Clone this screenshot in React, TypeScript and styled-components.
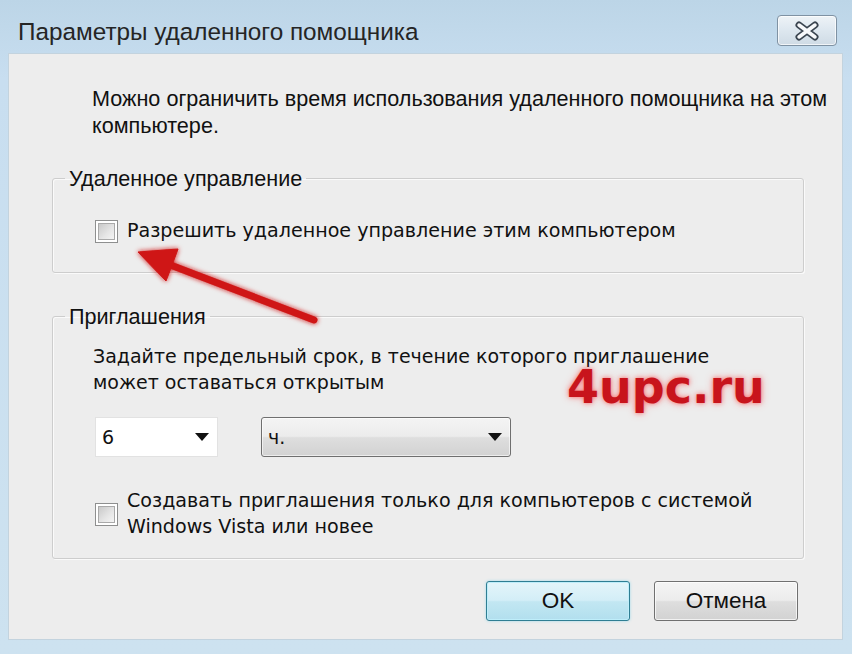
import React from "react";
import styled, { createGlobalStyle } from "styled-components";

const GlobalStyle = createGlobalStyle`
    html, body {
        margin: 0;
        padding: 0;
    }
    body {
        background: #c9dfee;
        font-family: "Liberation Sans", Arial, sans-serif;
        color: #111;
    }
`;

const Window = styled.div`
    position: relative;
    width: 852px;
    height: 654px;
    display: flex;
    flex-direction: column;
    background: linear-gradient(180deg, #bcd5e7 0%, #c8def0 12%, #cde2f0 100%);
    overflow: hidden;
`;

const TitleBar = styled.div`
    height: 53px;
    display: flex;
    align-items: flex-start;
    justify-content: space-between;
    padding: 15px 15px 0 18px;
    box-sizing: border-box;
`;

const Title = styled.div`
    margin-top: 4px;
    font-size: 24.3px;
    line-height: 26px;
    color: #252525;
`;

const CloseButton = styled.div`
    width: 60px;
    height: 31px;
    box-sizing: border-box;
    border: 1px solid #7f92a3;
    border-radius: 4px;
    background: linear-gradient(180deg, #eef3f7 0%, #dde7ef 50%, #cfdbe5 100%);
    box-shadow: inset 0 0 0 1px rgba(255, 255, 255, 0.7);
    display: flex;
    align-items: center;
    justify-content: center;
`;

const Client = styled.div`
    flex: 1;
    margin: 0 9px 14px 8px;
    background: #ededed;
    border: 1px solid #c3d3de;
    display: flex;
    flex-direction: column;
`;

const Description = styled.p`
    margin: 31px 0 0 83px;
    font-size: 21.6px;
    line-height: 27px;
`;

const Group = styled.fieldset<{ $top: number }>`
    margin: ${(p) => p.$top}px 0 0 43px;
    width: 752px;
    box-sizing: border-box;
    padding: 0;
    border: 1px solid #cdcdcd;
    border-radius: 3px;
    box-shadow: inset 1px 1px 0 #fafafa, 1px 1px 0 #fafafa;
`;

const Legend = styled.legend`
    margin-left: 12px;
    padding: 0 4px;
    font-size: 21.6px;
    line-height: 27px;
`;

const GroupBody = styled.div<{ $pt: number; $pb: number }>`
    padding: ${(p) => p.$pt}px 20px ${(p) => p.$pb}px 42px;
    display: flex;
    flex-direction: column;
`;

const CheckRow = styled.label`
    display: flex;
    align-items: center;
    gap: 9px;
    font-family: "DejaVu Sans", Verdana, sans-serif;
    font-size: 19.1px;
    line-height: 26px;
`;

const CheckBox = styled.span`
    flex: none;
    width: 23px;
    height: 23px;
    box-sizing: border-box;
    border: 1px solid #8e8f8f;
    background: #fff;
    padding: 2px;
    display: flex;

    &::after {
        content: "";
        flex: 1;
        border: 1px solid #a9a9a9;
        background: linear-gradient(135deg, #c9c9c9 0%, #e6e6e6 60%, #f4f4f4 100%);
    }
`;

const Hint = styled.div`
    margin-top: 13px;
    font-family: "DejaVu Sans", Verdana, sans-serif;
    font-size: 19px;
    line-height: 26px;
    margin-left: -2px;
`;

const ComboRow = styled.div`
    margin-top: 22px;
    display: flex;
    gap: 43px;
    margin-bottom: 31px;
`;

const Combo = styled.div<{ $width: number; $button?: boolean }>`
    width: ${(p) => p.$width}px;
    height: 40px;
    box-sizing: border-box;
    display: flex;
    align-items: center;
    justify-content: space-between;
    padding: 0 8px 0 6px;
    font-family: "DejaVu Sans", Verdana, sans-serif;
    font-size: 19px;
    border: 1px solid ${(p) => (p.$button ? "#6f6f6f" : "#e2e2e2")};
    border-radius: ${(p) => (p.$button ? "3px" : "0")};
    background: ${(p) =>
        p.$button
            ? "linear-gradient(180deg, #f4f4f4 0%, #ececec 48%, #dedede 52%, #d2d2d2 100%)"
            : "#fff"};
    box-shadow: ${(p) => (p.$button ? "inset 0 0 0 1px rgba(255,255,255,0.6)" : "none")};
`;

const Arrow = styled.span`
    width: 0;
    height: 0;
    border-left: 7px solid transparent;
    border-right: 7px solid transparent;
    border-top: 8px solid #111;
`;

const ButtonRow = styled.div`
    margin-top: 22px;
    display: flex;
    justify-content: flex-end;
    gap: 24px;
    padding-right: 44px;
`;

const Button = styled.div<{ $default?: boolean }>`
    width: 144px;
    height: 40px;
    box-sizing: border-box;
    display: flex;
    align-items: center;
    justify-content: center;
    font-size: 22.5px;
    border-radius: 3px;
    border: 1px solid ${(p) => (p.$default ? "#2f7e93" : "#707070")};
    background: ${(p) =>
        p.$default
            ? "linear-gradient(180deg, #e4f5fa 0%, #d3eef7 48%, #c2e7f2 52%, #b2dfee 100%)"
            : "linear-gradient(180deg, #f4f4f4 0%, #ececec 48%, #dedede 52%, #d2d2d2 100%)"};
    box-shadow: ${(p) =>
        p.$default
            ? "inset 0 0 0 1px #bfeefa, 0 0 3px #9fd9ea"
            : "inset 0 0 0 1px rgba(255,255,255,0.7)"};
`;

const Overlay = styled.svg`
    position: absolute;
    left: 0;
    top: 0;
    pointer-events: none;
`;

const Watermark = styled.span`
    position: absolute;
    left: 567px;
    top: 362px;
    font-family: "DejaVu Sans", Verdana, sans-serif;
    font-weight: bold;
    font-size: 46px;
    line-height: 50px;
    color: #c8141c;
    text-shadow: 0 0 4px rgba(255, 40, 40, 0.55), 0 0 8px rgba(255, 60, 60, 0.35);
    pointer-events: none;
`;

const CloseIcon = () => (
    <svg width="28" height="20" viewBox="0 0 28 20">
        <path d="M6 4 L22 16 M22 4 L6 16" stroke="#3a4550" strokeWidth="7" strokeLinecap="round" />
        <path d="M6 4 L22 16 M22 4 L6 16" stroke="#f7f9fb" strokeWidth="3.5" strokeLinecap="round" />
    </svg>
);

const RedArrow = () => (
    <Overlay width="852" height="654" viewBox="0 0 852 654">
        <defs>
            <filter id="glow" x="-20%" y="-20%" width="140%" height="140%">
                <feGaussianBlur stdDeviation="2.5" result="b" />
                <feMerge>
                    <feMergeNode in="b" />
                    <feMergeNode in="SourceGraphic" />
                </feMerge>
            </filter>
        </defs>
        <g filter="url(#glow)" fill="#cf1414" stroke="#cf1414">
            <line x1="314" y1="320" x2="160" y2="261" strokeWidth="7" strokeLinecap="round" />
            <polygon points="138,252 178,249 166,281" strokeWidth="1" />
        </g>
    </Overlay>
);

export default function App() {
    return (
        <>
            <GlobalStyle />
            <Window>
                <TitleBar>
                    <Title>Параметры удаленного помощника</Title>
                    <CloseButton>
                        <CloseIcon />
                    </CloseButton>
                </TitleBar>
                <Client>
                    <Description>
                        Можно ограничить время использования удаленного помощника на этом
                        <br />
                        компьютере.
                    </Description>
                    <Group $top={26}>
                        <Legend>Удаленное управление</Legend>
                        <GroupBody $pt={26} $pb={28}>
                            <CheckRow>
                                <CheckBox />
                                Разрешить удаленное управление этим компьютером
                            </CheckRow>
                        </GroupBody>
                    </Group>
                    <Group $top={30}>
                        <Legend>Приглашения</Legend>
                        <GroupBody $pt={0} $pb={18}>
                            <Hint>
                                Задайте предельный срок, в течение которого приглашение
                                <br />
                                может оставаться открытым
                            </Hint>
                            <ComboRow>
                                <Combo $width={123}>
                                    6
                                    <Arrow />
                                </Combo>
                                <Combo $width={250} $button>
                                    ч.
                                    <Arrow />
                                </Combo>
                            </ComboRow>
                            <CheckRow>
                                <CheckBox />
                                <span>
                                    Создавать приглашения только для компьютеров с системой
                                    <br />
                                    Windows Vista или новее
                                </span>
                            </CheckRow>
                        </GroupBody>
                    </Group>
                    <ButtonRow>
                        <Button $default>OK</Button>
                        <Button>Отмена</Button>
                    </ButtonRow>
                </Client>
                <Watermark>4upc.ru</Watermark>
                <RedArrow />
            </Window>
        </>
    );
}
